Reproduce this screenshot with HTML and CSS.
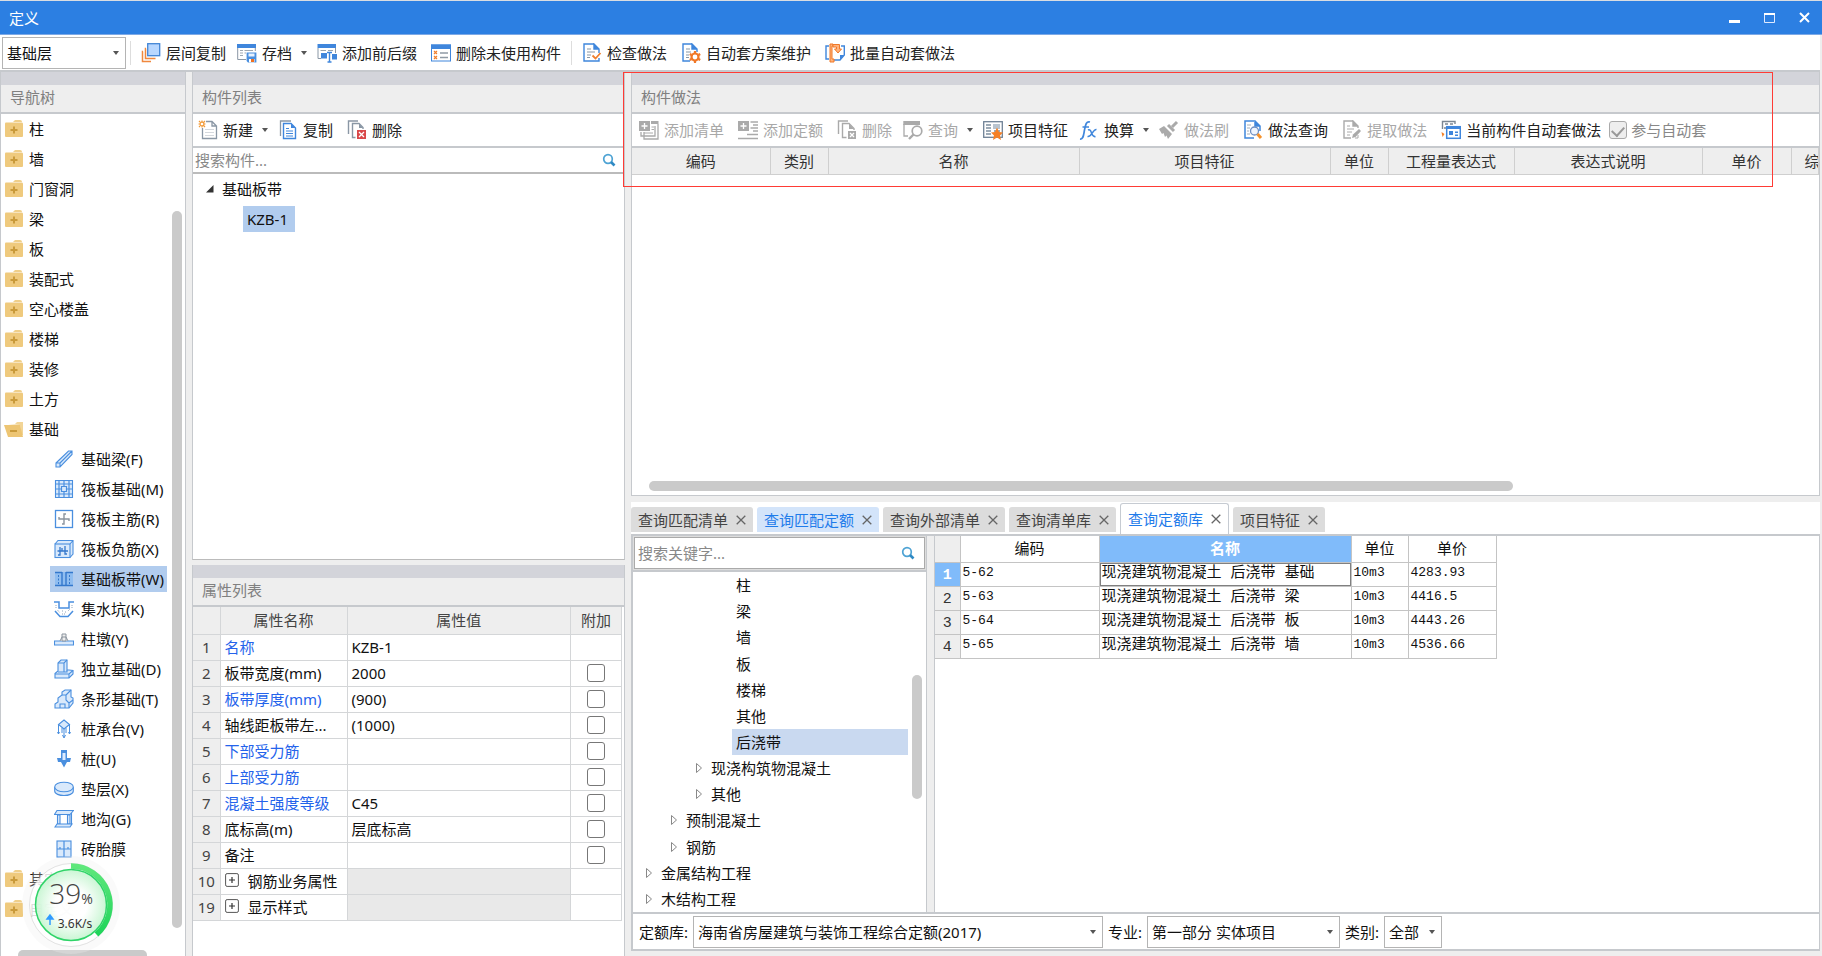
FILE: index.html
```html
<!DOCTYPE html>
<html lang="zh-CN">
<head>
<meta charset="utf-8">
<title>定义</title>
<link rel="stylesheet" href="styles.css">
</head>
<body>
<svg class="defs" width="0" height="0" aria-hidden="true">
  <symbol id="i-layers" viewBox="0 0 20 20"><g fill="none" stroke="#f0883e" stroke-width="1.5"><path d="M5 5.500H4.500V15.500H14.500"/><path d="M2 8.500H1.500V18.500H10"/></g><rect x="6.700" y=".7" width="12" height="12" fill="#b8d7ff" stroke="#4285d6" stroke-width="1.300"/></symbol>
  <symbol id="i-archive" viewBox="0 0 20 20"><path d="M.7 1V16.500H9M18.300 5V8" fill="none" stroke="#8a97a5"/><path d="M0 1H19V5H0z" fill="#3f86dc"/><path d="M3 7.500H6M7.500 7.500H16M3 10H6M7.500 10H9M3 12.500H6" stroke="#a0a9b3"/><path d="M9.600 9.600H19.400V19.400H11L9.600 18z" fill="#4a8fdf"/><path d="M11.500 10.500H17.500V13.500H11.500z" fill="#e8f2ff"/><path d="M12 16H17.500V19.400H12z" fill="#fff"/><path d="M14 16H17V19H14z" fill="#f07020"/></symbol>
  <symbol id="i-prefix" viewBox="0 0 20 20"><path d="M1 5V15.500H4M18.500 5V10" fill="none" stroke="#8a97a5"/><path d="M.5 1H19V5H.5z" fill="#3f86dc"/><path d="M3.500 7.500H9M11 7.500H16" stroke="#9aa5b0"/><path d="M4 10H10V15.500H4zM15 11H20V16.500H15z" fill="#3f86dc"/><path d="M10 9.500H15M12.500 9.500V18.500M10.500 19H14.500" fill="none" stroke="#3f86dc" stroke-width="1.400"/></symbol>
  <symbol id="i-unused" viewBox="0 0 20 20"><rect x=".5" y="2" width="19" height="16" fill="#fff" stroke="#3f86dc"/><path d="M0 1.500H20V6H0z" fill="#3f86dc"/><path d="M3 8L6 11M6 8L3 11M3 13L6 16M6 13L3 16" stroke="#f08030" stroke-width="1.200"/><path d="M9 10H17M9 14.500H17" stroke="#909aa5" stroke-width="1.300"/></symbol>
  <symbol id="i-check" viewBox="0 0 20 20"><path d="M12 1H2V18H17V15M17 10V6L12 1V6H17" fill="none" stroke="#3f86dc" stroke-width="1.400"/><path d="M12 1V6H17z" fill="#3f86dc"/><path d="M5 6H9M5 9H13M5 12H9M5 14.500H8" stroke="#8a97a5" stroke-width="1.200"/><path d="M10.500 12.500L13.500 15.500L18.500 10" fill="none" stroke="#f08030" stroke-width="1.800"/></symbol>
  <symbol id="i-gear" viewBox="0 0 20 20"><path d="M11 1H2V18H9M16 9V6L11 1V6H16" fill="none" stroke="#3f86dc" stroke-width="1.400"/><path d="M11 1V6H16z" fill="#3f86dc"/><path d="M5 6H9M5 9H10M5 12H8M5 14.500H8" stroke="#8a97a5" stroke-width="1.200"/><circle cx="14" cy="14" r="3.500" fill="#fff" stroke="#f07828" stroke-width="2.200"/><path d="M14 8V10M14 18V20M8.800 11L10.500 12M17.500 16L19.200 17M8.800 17L10.500 16M17.500 12L19.200 11" stroke="#f07828" stroke-width="2.200"/></symbol>
  <symbol id="i-batch" viewBox="0 0 20 20"><path d="M4 3H1V16H4M8 17H15L19.300 12V3H16" fill="none" stroke="#3f86dc" stroke-width="1.400"/><path d="M15 17V12H19.300z" fill="#3f86dc"/><path d="M8 1H5V19H9V16H7V3H8z" fill="#ffb37c" stroke="#f07828"/><path d="M8 1.500H14.500V6H16.500L13 10L9.500 6H11.500V4H8z" fill="#ffb37c" stroke="#f07828"/></symbol>
  <symbol id="i-new" viewBox="0 0 20 20"><path d="M4.500 8V18.500H18.500V6L14 1.500H8M14 1.500V6H18.500" fill="none" stroke="#8a97a5" stroke-width="1.300"/><path d="M7 9.500H16M7 12.500H16M7 15.500H16" stroke="#d4d8dd"/><circle cx="4" cy="4" r="2" fill="#fff" stroke="#f29a38" stroke-width="1.300"/><path d="M4 .5V1.500M4 6.500V7.500M.5 4H1.500M6.500 4H7.500M1 1L2 2M6 6L7 7M7 1L6 2M1 7L2 6" stroke="#f29a38" stroke-width="1.200"/></symbol>
  <symbol id="i-copy" viewBox="0 0 20 20"><path d="M13 1H2.500V16" fill="none" stroke="#8a97a5" stroke-width="1.300"/><path d="M5.500 3.500H13L17.500 8V18.500H5.500z" fill="#fff" stroke="#3f86dc" stroke-width="1.400"/><path d="M13 3.500V8H17.500z" fill="#3f86dc"/><path d="M8 8.500H11M8 11H15M8 13.500H15M8 16H15" stroke="#3f86dc"/></symbol>
  <symbol id="i-del" viewBox="0 0 20 20"><path d="M11 1H1.500V14M8.500 17.500H5.500V3.500H12L16 7.500V9" fill="none" stroke="#8a97a5" stroke-width="1.400"/><path d="M12 3.500V8H16z" fill="#8a97a5"/><path d="M10 10H19V19H10z" fill="#d9484a"/><path d="M12 12L17 17M17 12L12 17" stroke="#fff" stroke-width="1.300"/></symbol>
  <symbol id="i-del-off" viewBox="0 0 20 20"><path d="M11 1H1.500V14M9.500 17.500H5.500V3.500H12L17 8.500V10" fill="none" stroke="#aaa" stroke-width="1.400"/><path d="M12 3.500V9H17z" fill="#aaa"/><path d="M11 11H19V19H11z" fill="#aaa"/><path d="M13 13L17 17M17 13L13 17" stroke="#fff" stroke-width="1.300"/></symbol>
  <symbol id="i-addlist" viewBox="0 0 20 20"><path d="M0 1H11V11H0zM12 1H19.500V4H12z" fill="#aaa"/><path d="M5.500 3V9M2.500 6H8.500" stroke="#fff" stroke-width="1.300"/><path d="M19 4V19H5V12M16 6V16H2V12" fill="none" stroke="#aaa" stroke-width="1.300"/><path d="M12.500 7H15M12.500 9.500H15M5 13H14" stroke="#aaa"/></symbol>
  <symbol id="i-addquota" viewBox="0 0 20 20"><path d="M0 1H11V11H0z" fill="#aaa"/><path d="M5.500 3V9M2.500 6H8.500" stroke="#fff" stroke-width="1.300"/><path d="M12.500 2H20M15 5H20M12.500 8H20M15 11H20M9 14.500H20M0 18.500H20" stroke="#aaa" stroke-width="1.300"/></symbol>
  <symbol id="i-query" viewBox="0 0 20 20"><path d="M1 4V16H5" fill="none" stroke="#aaa" stroke-width="1.300"/><path d="M.3 1H17V5H.3z" fill="#aaa"/><circle cx="14" cy="11" r="4.800" fill="#fff" stroke="#aaa" stroke-width="1.700"/><path d="M10.500 14.500L6 19" stroke="#aaa" stroke-width="2.400"/></symbol>
  <symbol id="i-feature" viewBox="0 0 20 20"><rect x=".7" y="1.700" width="18.600" height="15.600" fill="#fff" stroke="#6f8296" stroke-width="1.300"/><path d="M3 5H8M3 8H8M3 11H8M3 14H8M11 11H17" stroke="#7e8e9e" stroke-width="1.300"/><path d="M10 4H17V9H10z" fill="#b9c4cf"/><path d="M14 7.500L16 12L20 12.500L17 15.500L18 20L14 17.500L10 20L11 15.500L8 12.500L12 12z" fill="#f58025"/></symbol>
  <symbol id="i-fx" viewBox="0 0 20 20"><path d="M1 19C4.500 19.500 4.500 15 5.500 10C6.500 5 7 1 11 2M3.500 7H10" fill="none" stroke="#3f86dc" stroke-width="1.700"/><path d="M9 10C13 8 12 18 16.500 16.500M17.500 9.500C13.500 9 13 17.500 8.500 16.500" fill="none" stroke="#3f86dc" stroke-width="1.500"/></symbol>
  <symbol id="i-brush" viewBox="0 0 20 20"><path d="M0 9L5 6L13 14L9 19L7.500 15.500L6 17L4.500 13L3 14z" fill="#aaa"/><path d="M9 5L15 11" stroke="#aaa" stroke-width="3"/><path d="M13 7L18 2" stroke="#aaa" stroke-width="3"/></symbol>
  <symbol id="i-docfind" viewBox="0 0 20 20"><path d="M11 1H2V18H11M17 11V6L12 1V6H17" fill="none" stroke="#3f86dc" stroke-width="1.500"/><path d="M12 1V6H17z" fill="#3f86dc"/><path d="M4 5H8M4 8H7M4 11H6M4 14H7" stroke="#a4aeb8"/><circle cx="11.500" cy="11" r="4" fill="#eef5ff" stroke="#6d8fc4" stroke-width="1.300"/><path d="M14.500 14L18 18" stroke="#f5922c" stroke-width="3"/></symbol>
  <symbol id="i-extract" viewBox="0 0 20 20"><path d="M11 1H2V18H9M16 8V6L11 1V6H16" fill="none" stroke="#aaa" stroke-width="1.400"/><path d="M11 1V6H16z" fill="#aaa"/><path d="M5 6H8M5 9H12M5 12H10M5 15H8" stroke="#aaa"/><path d="M10 18L11 14.500L17 9L19 11L13.500 17z" fill="#aaa"/><path d="M16 15V18H13" fill="none" stroke="#aaa"/></symbol>
  <symbol id="i-auto" viewBox="0 0 20 20"><path d="M1.500 9V1.500H14V4" fill="none" stroke="#7c8792" stroke-width="1.400"/><path d="M4 4H7M9 4H12M4 7V9" stroke="#7c8792" stroke-width="1.500"/><rect x="5.700" y="6.700" width="13.600" height="11.600" fill="#fff" stroke="#3f86dc" stroke-width="1.500"/><path d="M5 6H20V9H5z" fill="#3f86dc"/><path d="M8 11H12V15H8zM14 11.500H17V13H14zM14 14.500H17V16H14z" fill="#3f86dc"/><path d="M.5 12L3.500 14L1.500 17z" fill="#f58025"/></symbol>
  <symbol id="i-folder" viewBox="0 0 20 20"><path d="M12 1H17Q19 1 19 3H10z" fill="#f0cf8a"/><path d="M3 3.500H19Q20 3.500 20 5V17Q20 18 19 18H3Q2 18 2 17V4.500Q2 3.500 3 3.500z" fill="#efca7e"/><path d="M11 7.500V14.500M7.500 11H14.500" stroke="#c99a3a" stroke-width="2"/></symbol>
  <symbol id="i-folder-open" viewBox="0 0 20 20"><path d="M5 5H12L14 3H20V16H18L17 6z" fill="#f2d597"/><path d="M1 6H17L20 18H5z" fill="#edc573"/><path d="M7 12H14" stroke="#c99a3a" stroke-width="2"/></symbol>
  <symbol id="n-beam" viewBox="0 0 20 20"><path d="M2 14L14.500 2H18V5.500L6 18H2zM2 14H6V18M6 14L18 2" class="ln"/></symbol>
  <symbol id="n-raft" viewBox="0 0 20 20"><path d="M1.500 1.500H18.500V18.500H1.500z" class="ln"/><path d="M5 5H15V15H5zM7.500 7.500H12.500V12.500H7.500zM10 1.500V7.500M10 12.500V18.500M1.500 10H7.500M12.500 10H18.500M5 1.500V5H1.500M15 1.500V5H18.500M1.500 15H5V18.500M15 18.500V15H18.500" fill="none" stroke="#4a8fdf" stroke-width="1.200"/></symbol>
  <symbol id="n-main" viewBox="0 0 20 20"><rect x="1.500" y="1.500" width="17" height="17" fill="#fff" stroke="#4a8fdf" stroke-width="1.300"/><path d="M12 5H10V15H8M5 8V10H15V12" fill="none" stroke="#8b949e" stroke-width="1.400"/></symbol>
  <symbol id="n-neg" viewBox="0 0 20 20"><path d="M1 5L4 1.500H19V15L16 18.500M16 5L19 1.500" class="ln"/><rect x="1" y="5" width="15" height="13.500" class="ln"/><path d="M6 8V16H4M11 7V15H13M3.500 12H14M8 9V12" fill="none" stroke="#3478cc" stroke-width="1.300"/></symbol>
  <symbol id="n-strip" viewBox="0 0 20 20"><path d="M1 3H19V16H1z" fill="#8fbdf0"/><path d="M1 3.500H8M12 3.500H19M8 3V16M12 3V16M1 16.500H19" stroke="#3478cc" stroke-width="1.400"/><path d="M4.500 6V15M15.500 6V15" stroke="#3478cc" stroke-dasharray="2 1.500"/></symbol>
  <symbol id="n-pit" viewBox="0 0 20 20"><path d="M0 3H5V9H15V3H20M1 12L6 17.500H14L19 12" fill="none" stroke="#4a8fdf" stroke-width="1.500"/><path d="M2 6V9M3.500 11L6 14M8 12H9M11 13H12M14 12L16 10M18 6V9M8 15H12" stroke="#8fa4bb" stroke-dasharray="1 1"/></symbol>
  <symbol id="n-pier" viewBox="0 0 20 20"><path d="M.5 12H19.500V16H.5z" class="ln"/><path d="M6 12L8 8V5H12V8L14 12M8 8H12V12H8z" fill="#eee" stroke="#8b949e"/></symbol>
  <symbol id="n-iso" viewBox="0 0 20 20"><path d="M1 14.500L4 12V4L7 1H13V11H15L19 11.500V15L15 19H1z" class="ln"/><path d="M4 4H10L13 1M10 4V13M4 13H13V11M1 15H15L19 11.500M15 15V19" fill="none" stroke="#4a8fdf" stroke-width="1.100"/></symbol>
  <symbol id="n-linear" viewBox="0 0 20 20"><path d="M1 15L4 13V9L8 6V3L11 1H17V8L19 9V14L15 19H1z" class="ln"/><path d="M8 6H12V11L15 14V19M12 6L17 1M15 14L19 11M6 19V15H11V19" fill="none" stroke="#4a8fdf" stroke-width="1.100"/></symbol>
  <symbol id="n-cap" viewBox="0 0 20 20"><path d="M10 1L15.500 5.500L10 10L4.500 5.500z" class="ln"/><path d="M4.500 6V15M15.500 6V15M10 10V18M8 9V14M12 9V14M8.500 16L10 19L11.500 16M3.500 13L4.500 15L5.500 13M14.500 13L15.500 15L16.500 13" fill="none" stroke="#4a8fdf"/></symbol>
  <symbol id="n-pile" viewBox="0 0 20 20"><path d="M7 1H13V9H17L16 13H13L10 18.500L7 13H4L3 9H7z" fill="#4a8fdf"/><path d="M8.500 4H11.500V11H8.500z" fill="#dcebff"/></symbol>
  <symbol id="n-pad" viewBox="0 0 20 20"><path d="M.7 8V12C.7 18 19.300 18 19.300 12V8" class="ln"/><ellipse cx="10" cy="8" rx="9.300" ry="4.800" class="ln"/></symbol>
  <symbol id="n-trench" viewBox="0 0 20 20"><path d="M3 1.500H19.500L16 5.500H.5z" class="ln"/><path d="M3.500 6H6V15H3.500zM13.500 6H16V15H13.500z" class="ln"/><path d="M17.500 4V15M1 18H16L18 15H3z" class="ln"/></symbol>
  <symbol id="n-brick" viewBox="0 0 20 20"><rect x="3" y="2" width="14" height="16" class="ln"/><path d="M10 2V18M3 10H17M6 8V10M14 8V10" fill="none" stroke="#4a8fdf" stroke-width="1.200"/></symbol>
  <symbol id="i-search" viewBox="0 0 14 14"><circle cx="6" cy="6" r="4.300" fill="none" stroke="#4ea3d4" stroke-width="1.700"/><path d="M9 9L12.500 12.500" stroke="#2f8ac4" stroke-width="2.600"/></symbol>
  <symbol id="i-x" viewBox="0 0 10 10"><path d="M.7 .7L9.300 9.300M9.300 .7L.7 9.300" stroke="#666" stroke-width="1.300"/></symbol>
  <symbol id="i-tri" viewBox="0 0 8 12"><path d="M1.500 1.500L6.500 6L1.500 10.500z" fill="#fff" stroke="#888"/></symbol>
  <symbol id="i-plusbox" viewBox="0 0 14 14"><rect x=".6" y=".6" width="12.800" height="12.800" rx="1.500" fill="#fff" stroke="#555"/><path d="M7 4V10M4 7H10" stroke="#333" stroke-width="1.200"/></symbol>
</svg>

<div class="app">
  <div class="backdrop-edge"></div>
  <header class="titlebar">
    <span>定义</span>
    <div class="win-btns">
      <button aria-label="最小化"><svg width="11" height="11"><path d="M0 8H11V11H0z" fill="#fff"/></svg></button>
      <button aria-label="最大化"><svg width="11" height="11"><path d="M.5 1V10.500H10.500V1" fill="none" stroke="#dfeaff"/><path d="M0 1H11V3H0z" fill="#fff"/></svg></button>
      <button aria-label="关闭"><svg width="11" height="11"><path d="M1 1L10 10M10 1L1 10" stroke="#fff" stroke-width="2"/></svg></button>
    </div>
  </header>

  <div class="toolbar main-toolbar">
    <div class="combo floor"><select aria-label="楼层"><option>基础层</option></select></div>
    <i class="sep"></i>
    <button class="tb"><svg><use href="#i-layers"/></svg>层间复制</button>
    <button class="tb drop"><svg><use href="#i-archive"/></svg>存档</button>
    <button class="tb"><svg><use href="#i-prefix"/></svg>添加前后缀</button>
    <button class="tb"><svg><use href="#i-unused"/></svg>删除未使用构件</button>
    <i class="sep"></i>
    <button class="tb"><svg><use href="#i-check"/></svg>检查做法</button>
    <button class="tb"><svg><use href="#i-gear"/></svg>自动套方案维护</button>
    <button class="tb"><svg><use href="#i-batch"/></svg>批量自动套做法</button>
  </div>

  <main class="workspace">
    <section class="panel nav">
      <h2 class="panel-title">导航树</h2>
      <ul class="tree">
        <li><svg><use href="#i-folder"/></svg>柱</li>
        <li><svg><use href="#i-folder"/></svg>墙</li>
        <li><svg><use href="#i-folder"/></svg>门窗洞</li>
        <li><svg><use href="#i-folder"/></svg>梁</li>
        <li><svg><use href="#i-folder"/></svg>板</li>
        <li><svg><use href="#i-folder"/></svg>装配式</li>
        <li><svg><use href="#i-folder"/></svg>空心楼盖</li>
        <li><svg><use href="#i-folder"/></svg>楼梯</li>
        <li><svg><use href="#i-folder"/></svg>装修</li>
        <li><svg><use href="#i-folder"/></svg>土方</li>
        <li><svg><use href="#i-folder-open"/></svg>基础</li>
        <li class="sub"><span><svg><use href="#n-beam"/></svg>基础梁(F)</span></li>
        <li class="sub"><span><svg><use href="#n-raft"/></svg>筏板基础(M)</span></li>
        <li class="sub"><span><svg><use href="#n-main"/></svg>筏板主筋(R)</span></li>
        <li class="sub"><span><svg><use href="#n-neg"/></svg>筏板负筋(X)</span></li>
        <li class="sub"><span class="picked"><svg><use href="#n-strip"/></svg>基础板带(W)</span></li>
        <li class="sub"><span><svg><use href="#n-pit"/></svg>集水坑(K)</span></li>
        <li class="sub"><span><svg><use href="#n-pier"/></svg>柱墩(Y)</span></li>
        <li class="sub"><span><svg><use href="#n-iso"/></svg>独立基础(D)</span></li>
        <li class="sub"><span><svg><use href="#n-linear"/></svg>条形基础(T)</span></li>
        <li class="sub"><span><svg><use href="#n-cap"/></svg>桩承台(V)</span></li>
        <li class="sub"><span><svg><use href="#n-pile"/></svg>桩(U)</span></li>
        <li class="sub"><span><svg><use href="#n-pad"/></svg>垫层(X)</span></li>
        <li class="sub"><span><svg><use href="#n-trench"/></svg>地沟(G)</span></li>
        <li class="sub"><span><svg><use href="#n-brick"/></svg>砖胎膜</span></li>
        <li><svg><use href="#i-folder"/></svg>其它</li>
        <li><svg><use href="#i-folder"/></svg>自定义</li>
      </ul>
      <div class="thumb nav-v"></div>
      <div class="thumb nav-h"></div>
    </section>

    <div class="middle">
      <section class="panel members">
        <h2 class="panel-title">构件列表</h2>
        <div class="toolbar sub-toolbar">
          <button class="tb drop"><svg><use href="#i-new"/></svg>新建</button>
          <button class="tb"><svg><use href="#i-copy"/></svg>复制</button>
          <button class="tb"><svg><use href="#i-del"/></svg>删除</button>
        </div>
        <div class="search"><input type="text" placeholder="搜索构件..." aria-label="搜索构件"><svg><use href="#i-search"/></svg></div>
        <ul class="member-tree">
          <li><svg width="8" height="8"><path d="M7.500 0V7.500H0z" fill="#333"/></svg>基础板带</li>
          <li class="leaf"><span>KZB-1</span></li>
        </ul>
      </section>
      <section class="panel props">
        <h2 class="panel-title">属性列表</h2>
        <table class="prop-table">
          <colgroup><col class="p-no"><col class="p-name"><col><col class="p-add"></colgroup>
          <thead><tr><th></th><th>属性名称</th><th>属性值</th><th>附加</th></tr></thead>
          <tbody>
            <tr><th>1</th><td class="key">名称</td><td>KZB-1</td><td></td></tr>
            <tr><th>2</th><td>板带宽度(mm)</td><td>2000</td><td><input type="checkbox" aria-label="附加 板带宽度"></td></tr>
            <tr><th>3</th><td class="key">板带厚度(mm)</td><td>(900)</td><td><input type="checkbox" aria-label="附加 板带厚度"></td></tr>
            <tr><th>4</th><td>轴线距板带左...</td><td>(1000)</td><td><input type="checkbox" aria-label="附加 轴线距板带左"></td></tr>
            <tr><th>5</th><td class="key">下部受力筋</td><td></td><td><input type="checkbox" aria-label="附加 下部受力筋"></td></tr>
            <tr><th>6</th><td class="key">上部受力筋</td><td></td><td><input type="checkbox" aria-label="附加 上部受力筋"></td></tr>
            <tr><th>7</th><td class="key">混凝土强度等级</td><td>C45</td><td><input type="checkbox" aria-label="附加 混凝土强度等级"></td></tr>
            <tr><th>8</th><td>底标高(m)</td><td>层底标高</td><td><input type="checkbox" aria-label="附加 底标高"></td></tr>
            <tr><th>9</th><td>备注</td><td></td><td><input type="checkbox" aria-label="附加 备注"></td></tr>
            <tr><th>10</th><td><svg class="plus"><use href="#i-plusbox"/></svg>钢筋业务属性</td><td class="off"></td><td></td></tr>
            <tr><th>19</th><td><svg class="plus"><use href="#i-plusbox"/></svg>显示样式</td><td class="off"></td><td></td></tr>
          </tbody>
        </table>
      </section>
    </div>

    <div class="right">
      <section class="panel methods">
        <h2 class="panel-title">构件做法</h2>
        <div class="toolbar sub-toolbar methods-bar">
          <button class="tb" disabled><svg><use href="#i-addlist"/></svg>添加清单</button>
          <button class="tb" disabled><svg><use href="#i-addquota"/></svg>添加定额</button>
          <button class="tb" disabled><svg><use href="#i-del-off"/></svg>删除</button>
          <button class="tb drop" disabled><svg><use href="#i-query"/></svg>查询</button>
          <button class="tb"><svg><use href="#i-feature"/></svg>项目特征</button>
          <button class="tb drop"><svg><use href="#i-fx"/></svg>换算</button>
          <button class="tb" disabled><svg><use href="#i-brush"/></svg>做法刷</button>
          <button class="tb"><svg><use href="#i-docfind"/></svg>做法查询</button>
          <button class="tb" disabled><svg><use href="#i-extract"/></svg>提取做法</button>
          <button class="tb"><svg><use href="#i-auto"/></svg>当前构件自动套做法</button>
          <label class="join"><input type="checkbox" checked disabled>参与自动套</label>
        </div>
        <table class="method-table">
          <colgroup><col class="m1"><col class="m2"><col class="m3"><col class="m3"><col class="m2"><col class="m6"><col class="m7"><col class="m8"><col></colgroup>
          <thead><tr><th>编码</th><th>类别</th><th>名称</th><th>项目特征</th><th>单位</th><th>工程量表达式</th><th>表达式说明</th><th>单价</th><th class="cut">综</th></tr></thead>
        </table>
        <div class="thumb methods-h"></div>
      </section>

      <section class="query">
        <nav class="tabs">
          <div class="tab"><button>查询匹配清单</button><button aria-label="关闭"><svg><use href="#i-x"/></svg></button></div>
          <div class="tab hot"><button>查询匹配定额</button><button aria-label="关闭"><svg><use href="#i-x"/></svg></button></div>
          <div class="tab"><button>查询外部清单</button><button aria-label="关闭"><svg><use href="#i-x"/></svg></button></div>
          <div class="tab"><button>查询清单库</button><button aria-label="关闭"><svg><use href="#i-x"/></svg></button></div>
          <div class="tab active"><button>查询定额库</button><button aria-label="关闭"><svg><use href="#i-x"/></svg></button></div>
          <div class="tab"><button>项目特征</button><button aria-label="关闭"><svg><use href="#i-x"/></svg></button></div>
        </nav>
        <div class="query-body">
          <div class="catalog">
            <div class="search boxed"><input type="text" placeholder="搜索关键字..." aria-label="搜索关键字"><svg><use href="#i-search"/></svg></div>
            <ul class="catalog-tree">
              <li class="d4">柱</li>
              <li class="d4">梁</li>
              <li class="d4">墙</li>
              <li class="d4">板</li>
              <li class="d4">楼梯</li>
              <li class="d4">其他</li>
              <li class="d4 picked">后浇带</li>
              <li class="d3"><svg><use href="#i-tri"/></svg>现浇构筑物混凝土</li>
              <li class="d3"><svg><use href="#i-tri"/></svg>其他</li>
              <li class="d2"><svg><use href="#i-tri"/></svg>预制混凝土</li>
              <li class="d2"><svg><use href="#i-tri"/></svg>钢筋</li>
              <li class="d1"><svg><use href="#i-tri"/></svg>金属结构工程</li>
              <li class="d1"><svg><use href="#i-tri"/></svg>木结构工程</li>
            </ul>
            <div class="thumb catalog-v"></div>
          </div>
          <div class="results">
            <table class="quota-table">
              <colgroup><col class="q0"><col class="q1"><col class="q2"><col class="q3"><col class="q4"></colgroup>
              <thead><tr><th class="corner"></th><th>编码</th><th class="sel">名称</th><th>单位</th><th>单价</th></tr></thead>
              <tbody>
                <tr><th class="sel">1</th><td>5-62</td><td class="name focus">现浇建筑物混凝土 后浇带 基础</td><td>10m3</td><td>4283.93</td></tr>
                <tr><th>2</th><td>5-63</td><td class="name">现浇建筑物混凝土 后浇带 梁</td><td>10m3</td><td>4416.5</td></tr>
                <tr><th>3</th><td>5-64</td><td class="name">现浇建筑物混凝土 后浇带 板</td><td>10m3</td><td>4443.26</td></tr>
                <tr><th>4</th><td>5-65</td><td class="name">现浇建筑物混凝土 后浇带 墙</td><td>10m3</td><td>4536.66</td></tr>
              </tbody>
            </table>
          </div>
        </div>
        <footer class="filters">
          <label for="lib">定额库:</label>
          <div class="combo lib"><select id="lib"><option>海南省房屋建筑与装饰工程综合定额(2017)</option></select></div>
          <label for="major">专业:</label>
          <div class="combo major"><select id="major"><option>第一部分 实体项目</option></select></div>
          <label for="kind">类别:</label>
          <div class="combo kind"><select id="kind"><option>全部</option></select></div>
        </footer>
      </section>
    </div>
  </main>

  <div class="highlight"></div>

  <div class="gauge">
    <svg viewBox="0 0 100 100" aria-hidden="true">
      <defs><radialGradient id="gg"><stop offset=".45" stop-color="#fff"/><stop offset="1" stop-color="#c4f5cf"/></radialGradient>
      <linearGradient id="ga" x1="0" y1="0" x2="0" y2="1"><stop offset="0" stop-color="#5fe87c"/><stop offset="1" stop-color="#1fd45a"/></linearGradient></defs>
      <circle cx="50" cy="50" r="49" fill="#eee" opacity=".3"/>
      <circle cx="50" cy="50" r="41.500" fill="#fff" opacity=".8" stroke="#ddd"/>
      <path d="M50 11A39 39 0 0 1 75.500 79.500" fill="none" stroke="url(#ga)" stroke-width="5.500"/>
      <circle cx="50" cy="50" r="35.500" fill="url(#gg)" fill-opacity=".9" stroke="#2fd468" stroke-width="1.500"/>
      <path d="M29 70V63M26 64L29 60L32 64z" fill="#2f9bff" stroke="#2f9bff" stroke-width="1.500"/>
    </svg>
    <div class="gauge-text"><div class="pct">39<small>%</small></div><div class="rate">3.6K/s</div></div>
  </div>
</div>
</body>
</html>
```
FILE: styles.css
```css
* { box-sizing: border-box; }
body {
  margin: 0;
  font: 15px/20px "Noto Sans", "Noto Sans CJK SC", sans-serif;
  color: #111;
  background: #eee;
}
button, input, select { font: inherit; color: inherit; margin: 0; }
button { border: 0; background: none; padding: 0; white-space: nowrap; }
ul { list-style: none; margin: 0; padding: 0; }
table { border-collapse: collapse; table-layout: fixed; }
th { font-weight: 400; }
.defs { position: absolute; }
.ln { fill: #d9e9fb; stroke: #4a8fdf; stroke-width: 1.1px; }

.app { display: flex; flex-direction: column; height: 100vh; position: relative; overflow: hidden; }
.backdrop-edge { height: 1px; background: #d9dde2; }
.titlebar {
  display: flex; align-items: center; justify-content: space-between;
  height: 34px; padding: 0 12px 0 9px; background: #2c7fe2; color: #fff;
  border-bottom: 1px solid #7da9e6; flex: none;
}
.win-btns { display: flex; gap: 24px; }
.win-btns button { width: 11px; height: 20px; }
.win-btns svg { display: block; margin: auto; }

.toolbar { display: flex; align-items: center; background: #fff; flex: none; }
.main-toolbar { height: 37px; padding-left: 2px; border-bottom: 2px solid #c6c9cd; margin-right: 2px; }
.sub-toolbar { height: 34px; padding-left: 1px; border-bottom: 2px solid #c6c9cd; }
.methods-bar { padding-left: 0; }
.tb { display: flex; align-items: center; gap: 5px; height: 26px; padding: 0 7px; flex: none; color: #222; }
.tb svg { width: 20px; height: 20px; }
.tb:disabled { color: #a8a8a8; }
.tb.drop { padding: 0 2px 0 4px; }
.tb.drop::after {
  content: ""; margin: 0 1px 0 4px;
  border: 3px solid transparent; border-top: 4px solid #555; border-bottom: 0;
}
.sep { width: 1px; height: 24px; margin: 0 3px; background: #ddd; }
.join { display: flex; align-items: center; gap: 4px; padding-left: 1px; color: #888; }
.join input {
  appearance: none; width: 18px; height: 18px; border: 1px solid #aaa; border-radius: 3px; background: #eee;
  display: grid; place-items: center;
}
.join input::before {
  content: ""; width: 10px; height: 6px; border: solid #999; border-width: 0 0 2px 2px; transform: rotate(-48deg);
}

.combo { position: relative; background: #fff; }
.combo select {
  appearance: none; width: 100%; height: 32px; padding: 0 20px 0 4px;
  border: 1px solid #b4b4b4; border-radius: 0; background: #fff; display: block;
}
.combo::after {
  content: ""; position: absolute; right: 7px; top: 14px; pointer-events: none;
  border: 3px solid transparent; border-top: 4px solid #555; border-bottom: 0;
}
.floor { width: 124px; margin-right: 1px; }

.workspace {
  flex: 1; min-height: 0; display: grid; grid-template-columns: 186px 433px 1fr; column-gap: 6px;
  padding-right: 2px;
}
.panel { background: #fff; border: solid #c6c9cd; border-width: 0 1px; display: flex; flex-direction: column; position: relative; overflow: hidden; min-height: 0; }
.panel-title {
  margin: 0; padding: 2px 0 4px 9px; font-size: 15px; font-weight: 400; line-height: 21px; color: #808080;
  background: #eee; border-top: 13px solid #d3d4da; border-bottom: 2px solid #c6c9cd; flex: none;
}
.thumb { position: absolute; background: #cacaca; border-radius: 5px; }
.nav-v { right: 3px; top: 139px; bottom: 28px; width: 10px; }
.nav-h { left: 17px; bottom: -4px; width: 129px; height: 10px; }

.tree li { display: flex; align-items: center; height: 30px; padding-left: 2px; gap: 6px; }
.tree svg { width: 20px; height: 20px; flex: none; }
.tree .sub { padding-left: 49px; }
.sub span { display: flex; align-items: center; gap: 7px; height: 26px; padding: 0 3px 0 4px; white-space: nowrap; }
.sub .picked, .leaf span { background: #b1ccee; }

.middle { display: grid; grid-template-rows: 488px 1fr; row-gap: 5px; min-height: 0; }
.members { border-bottom: 1px solid #bbb; }
.search { display: flex; align-items: center; height: 26px; flex: none; border-bottom: 2px solid #bbb; padding-right: 8px; background: #fff; }
.search input { flex: 1; min-width: 0; border: 0; outline: 0; padding: 0 2px; background: none; }
.search input::placeholder { color: #888; opacity: 1; }
.search svg { width: 14px; height: 14px; }
.member-tree li { display: flex; align-items: center; height: 30px; padding-left: 13px; gap: 8px; }
.member-tree .leaf { padding-left: 50px; }
.leaf span { height: 26px; line-height: 26px; padding: 0 7px 0 4px; }

.prop-table { width: calc(100% - 2px); }
.p-no { width: 27px; }
.p-name { width: 127px; }
.p-add { width: 51px; }
.prop-table th, .prop-table td { height: 26px; border: 1px solid #d4d6d8; border-top: 0; border-left: 0; padding: 0 0 0 4px; white-space: nowrap; overflow: hidden; }
.prop-table th { background: #eee; color: #444; padding: 0; }
.prop-table thead th { height: 27px; }
.prop-table td:last-child { text-align: center; padding: 0; }
.prop-table input { appearance: none; display: block; margin: 0 auto; width: 18px; height: 18px; border: 1px solid #777; border-radius: 3px; background: #fff; }
.prop-table .key { color: #2463eb; }
.prop-table .off { background: #e9e9e9; }
.plus { width: 14px; height: 14px; margin-right: 9px; }

.right { display: grid; grid-template-rows: 424px 1fr; row-gap: 6px; min-width: 0; min-height: 0; }
.methods { border-bottom: 1px solid #c6c9cd; }
.method-table { width: 100%; }
.method-table th { height: 26px; padding: 0; background: #eee; color: #333; border: 1px solid #cfcfcf; border-width: 0 1px 1px 0; white-space: nowrap; overflow: hidden; }
.m1 { width: 138px; } .m2 { width: 58px; } .m3 { width: 251px; }
.m6 { width: 126px; } .m7 { width: 188px; } .m8 { width: 89px; }
.method-table .cut { text-align: left; padding-left: 13px; }
.methods-h { left: 17px; bottom: 4px; width: 864px; height: 10px; }

.query { display: flex; flex-direction: column; min-height: 0; padding-bottom: 5px; }
.tabs { display: flex; align-items: flex-end; gap: 4px; height: 32px; background: #fff; flex: none; }
.tab { display: flex; align-items: center; gap: 8px; height: 25px; padding: 0 7px; margin-bottom: 2px; background: #dcdcdc; border-radius: 3px 3px 0 0; color: #444; }
.tab svg { width: 10px; height: 10px; display: block; }
.tab.hot { background: #d3e4fa; color: #1f7cea; }
.tab.active { height: 31px; margin-bottom: 0; background: #fff; border: 1px solid #c6cbd2; border-bottom: 0; color: #1f7cea; }
.query-body { flex: 1; min-height: 0; display: grid; grid-template-columns: 294px 1fr; column-gap: 7px; border: 2px solid #c6c9cd; border-width: 2px 1px 2px 2px; }
.catalog { display: flex; flex-direction: column; position: relative; background: #fff; border-right: 1px solid #c6c9cd; min-height: 0; }
.search.boxed { height: 32px; margin: 1px; border: 1px solid #aaa; outline: 1px solid #ddd; padding: 0 9px 0 1px; }
.catalog-tree { flex: 1; min-height: 0; border-top: 2px solid #c6c9cd; display: flex; flex-direction: column; }
.catalog-tree li { flex: 1; display: flex; align-items: center; gap: 8px; }
.catalog-tree svg { width: 8px; height: 12px; }
.catalog-tree .d4 { margin: 0 18px 0 99px; padding-left: 4px; }
.d3 { padding-left: 62px; } .d2 { padding-left: 37px; } .d1 { padding-left: 12px; }
.catalog-tree .picked { background: #c9d9f0; }
.catalog-v { right: 4px; top: 139px; width: 10px; height: 124px; }
.results { background: #fff; border-left: 1px solid #c6c9cd; min-width: 0; }

.quota-table { width: 561px; font: 13px/18px "Liberation Mono", "Noto Sans CJK SC", monospace; }
.q0 { width: 25px; } .q1 { width: 139px; } .q2 { width: 252px; } .q3 { width: 57px; } .q4 { width: 88px; }
.quota-table th, .quota-table td { border: 1px solid #c4c4c4; border-top: 0; border-left: 0; height: 24px; padding: 0 2px; white-space: nowrap; vertical-align: top; }
.quota-table thead th { height: 26px; padding-top: 4px; font-size: 15px; vertical-align: middle; }
.quota-table tbody th, .quota-table .corner { background: #eee; padding-top: 3px; vertical-align: middle; font-size: 15px; color: #333; }
.quota-table td { padding-top: 1px; }
.quota-table .name { font-size: 15px; line-height: 20px; }
.quota-table .sel, .quota-table tbody .sel { background: #80bbfa; color: #fff; font-weight: 700; }
.quota-table .focus { box-shadow: inset 0 0 0 1px #808080; }

.filters { display: flex; align-items: center; height: 37px; padding-left: 6px; background: #fff; border: 2px solid #c6c9cd; border-width: 0 1px 2px 2px; flex: none; }
.filters label { padding: 0 5px; white-space: nowrap; }
.filters label:first-child { padding-left: 0; }
.lib { width: 410px; }
.major { width: 193px; }
.kind { width: 58px; }

.highlight { position: absolute; left: 623px; right: 49px; top: 72px; height: 115px; border: 1px solid #ff3b35; pointer-events: none; }
.gauge { position: absolute; left: 21px; bottom: 1px; width: 100px; height: 100px; }
.gauge > svg { width: 100px; height: 100px; display: block; }
.gauge-text { position: absolute; inset: 0; text-align: center; color: #444; }
.pct { padding-top: 22px; font: 300 28px/32px "Open Sans", "Noto Sans", sans-serif; }
.pct small { font-size: 14px; font-weight: 400; }
.rate { padding-left: 8px; font-size: 12px; line-height: 18px; color: #333; }
```
